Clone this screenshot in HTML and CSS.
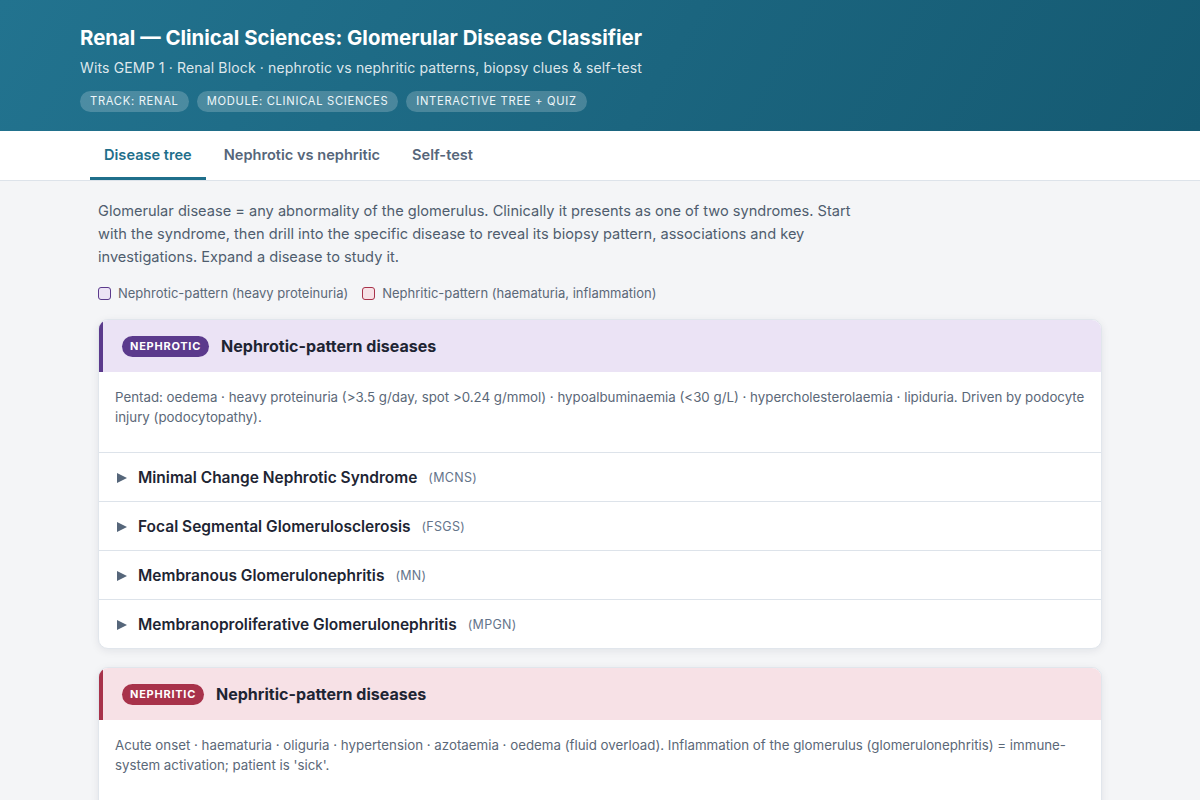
FILE: index.html
```html
<!DOCTYPE html>
<html lang="en">
<head>
    <meta charset="UTF-8">
    <meta name="viewport" content="width=device-width, initial-scale=1.0">
    <title>Renal — Glomerular Disease Classifier</title>
    <link rel="stylesheet" href="styles.css">
</head>
<body>
    <header class="hero">
        <div class="wrap">
            <h1>Renal — Clinical Sciences: Glomerular Disease Classifier</h1>
            <p class="sub">Wits GEMP 1 · Renal Block · nephrotic vs nephritic patterns, biopsy clues &amp; self-test</p>
            <div class="pills">
                <span class="pill">Track: Renal</span>
                <span class="pill">Module: Clinical Sciences</span>
                <span class="pill">Interactive tree + quiz</span>
            </div>
        </div>
    </header>

    <nav class="tabs">
        <div class="wrap tab-row">
            <button class="tab active">Disease tree</button>
            <button class="tab">Nephrotic vs nephritic</button>
            <button class="tab">Self-test</button>
        </div>
    </nav>

    <main class="wrap main">
        <p class="intro">Glomerular disease = any abnormality of the glomerulus. Clinically it presents as one of two syndromes. Start with the syndrome, then drill into the specific disease to reveal its biopsy pattern, associations and key investigations. Expand a disease to study it.</p>

        <div class="legend">
            <span class="key"><i class="swatch nephrotic"></i>Nephrotic-pattern (heavy proteinuria)</span>
            <span class="key"><i class="swatch nephritic"></i>Nephritic-pattern (haematuria, inflammation)</span>
        </div>

        <section class="group nephrotic">
            <div class="group-head">
                <span class="badge">Nephrotic</span>
                <h2>Nephrotic-pattern diseases</h2>
            </div>
            <p class="group-sum">Pentad: oedema · heavy proteinuria (&gt;3.5 g/day, spot &gt;0.24 g/mmol) · hypoalbuminaemia (&lt;30 g/L) · hypercholesterolaemia · lipiduria. Driven by podocyte injury (podocytopathy).</p>
            <ul class="diseases">
                <li><span class="caret"></span><span class="name">Minimal Change Nephrotic Syndrome</span><span class="abbr">(MCNS)</span></li>
                <li><span class="caret"></span><span class="name">Focal Segmental Glomerulosclerosis</span><span class="abbr">(FSGS)</span></li>
                <li><span class="caret"></span><span class="name">Membranous Glomerulonephritis</span><span class="abbr">(MN)</span></li>
                <li><span class="caret"></span><span class="name">Membranoproliferative Glomerulonephritis</span><span class="abbr">(MPGN)</span></li>
            </ul>
        </section>

        <section class="group nephritic">
            <div class="group-head">
                <span class="badge">Nephritic</span>
                <h2>Nephritic-pattern diseases</h2>
            </div>
            <p class="group-sum">Acute onset · haematuria · oliguria · hypertension · azotaemia · oedema (fluid overload). Inflammation of the glomerulus (glomerulonephritis) = immune-system activation; patient is 'sick'.</p>
            <ul class="diseases">
                <li><span class="caret"></span><span class="name">Post-Streptococcal Glomerulonephritis</span><span class="abbr">(PSGN)</span></li>
                <li><span class="caret"></span><span class="name">IgA Nephropathy</span><span class="abbr">(Berger)</span></li>
            </ul>
        </section>
    </main>
</body>
</html>
```

FILE: styles.css
```css
* {
    margin: 0;
    padding: 0;
    box-sizing: border-box;
}

body {
    font-family: Inter, 'Noto Sans', sans-serif;
    background: #f4f5f7;
    color: #1f2937;
}

.wrap {
    max-width: 1040px;
    margin: 0 auto;
}

.hero {
    background: linear-gradient(120deg, #22738f 0%, #1b657f 55%, #155a72 100%);
    color: #fff;
    padding: 26px 0 19px;
}

.hero h1 {
    font-size: 20.4px;
    font-weight: 700;
    line-height: 24px;
}

.sub {
    font-size: 14px;
    letter-spacing: 0.15px;
    color: rgba(255, 255, 255, 0.86);
    margin-top: 9px;
    line-height: 18px;
}

.pills {
    display: flex;
    gap: 8px;
    margin-top: 14px;
}

.pill {
    font-size: 11.2px;
    text-transform: uppercase;
    letter-spacing: 0.7px;
    background: rgba(255, 255, 255, 0.2);
    color: #eef6f9;
    border-radius: 999px;
    padding: 4px 10px;
    line-height: 13px;
}

.tabs {
    background: #fff;
    border-bottom: 1px solid #dde3ea;
}

.tab-row {
    display: flex;
    padding: 0 10px;
}

.tab {
    font-family: inherit;
    font-size: 14.6px;
    font-weight: 600;
    color: #56667a;
    background: none;
    border: none;
    border-bottom: 3px solid transparent;
    padding: 15px 14px 13px;
    margin-right: 4px;
    cursor: pointer;
}

.tab.active {
    color: #1f6f8b;
    border-bottom-color: #1f6f8b;
}

.main {
    padding: 19px 18px 40px;
}

.intro {
    max-width: 760px;
    font-size: 14.6px;
    line-height: 23px;
    color: #4f5d6e;
}

.legend {
    display: flex;
    gap: 14px;
    margin: 16px 0 18px;
    font-size: 13px;
    color: #5b6878;
}

.key {
    display: flex;
    align-items: center;
    gap: 7px;
}

.swatch {
    width: 13px;
    height: 13px;
    border-radius: 3px;
    border: 1.5px solid;
}

.swatch.nephrotic {
    background: #ece3f5;
    border-color: #5b3a8c;
}

.swatch.nephritic {
    background: #f7e1e6;
    border-color: #a8324a;
}

.group {
    background: #fff;
    border: 1px solid #e1e6ec;
    border-radius: 10px;
    box-shadow: 0 2px 8px rgba(15, 30, 50, 0.08);
    overflow: hidden;
    margin-bottom: 18px;
}

.group-head {
    display: flex;
    align-items: center;
    gap: 12px;
    padding: 15px 18px 15px 19px;
    border-left: 4px solid;
}

.nephrotic .group-head {
    background: #ebe3f5;
    border-left-color: #5b3a8c;
}

.nephritic .group-head {
    background: #f7e1e6;
    border-left-color: #a8324a;
}

.badge {
    font-size: 11px;
    font-weight: 700;
    letter-spacing: 0.75px;
    text-transform: uppercase;
    color: #fff;
    border-radius: 999px;
    padding: 3px 8px;
    line-height: 15px;
}

.nephrotic .badge {
    background: #5b3a8c;
}

.nephritic .badge {
    background: #a8324a;
}

.group-head h2 {
    font-size: 16px;
    font-weight: 700;
    color: #1e2533;
    line-height: 22px;
}

.group-sum {
    font-size: 13.3px;
    line-height: 20px;
    color: #5b6878;
    padding: 15px 16px 25px;
}

.diseases {
    list-style: none;
}

.diseases li {
    display: flex;
    align-items: center;
    border-top: 1px solid #dde3ea;
    padding: 15px 18px 14px;
    cursor: pointer;
}

.caret {
    width: 0;
    height: 0;
    border-top: 5px solid transparent;
    border-bottom: 5px solid transparent;
    border-left: 10px solid #56667a;
    margin-right: 11px;
}

.name {
    font-size: 15.5px;
    font-weight: 600;
    color: #1e2533;
    line-height: 19px;
}

.abbr {
    font-size: 12.5px;
    color: #64748b;
    margin-left: 11px;
    letter-spacing: 0.3px;
}
```
